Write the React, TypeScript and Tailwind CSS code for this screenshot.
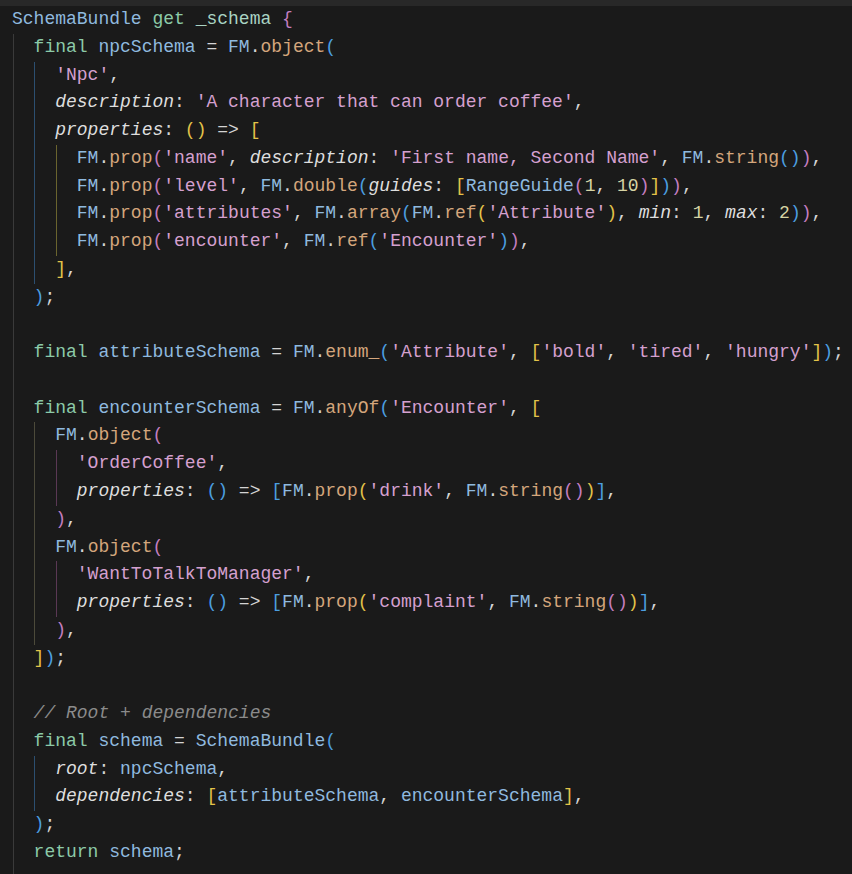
import React from "react";

type Tok = [string, string?];
type Guide = "g0" | "b1" | "y2" | "d1" | "p2" | "b1s";

const K = "text-[#8ccaa8]";
const V = "text-[#8fb9df]";
const F = "text-[#d4a67c]";
const S = "text-[#d5a0cf]";
const P = "italic text-[#dedede]";
const N = "text-[#d6d4a4]";
const Y = "text-[#e3c349]";
const Pk = "text-[#c47ec0]";
const B = "text-[#4c9fe0]";
const C = "italic text-[#8b8b8b]";

const fm = (m: string): Tok[] => [["FM", V], ["."], [m, F]];

const lines: { t: Tok[]; g: Guide[] }[] = [
  { t: [["SchemaBundle", V], [" "], ["get", K], [" "], ["_schema", "text-[#a9d3c3]"], [" "], ["{", Pk]], g: [] },
  { t: [["  "], ["final", K], [" "], ["npcSchema", V], [" = "], ...fm("object"), ["(", B]], g: ["g0"] },
  { t: [["    "], ["'Npc'", S], [","]], g: ["g0", "b1"] },
  { t: [["    "], ["description", P], [": "], ["'A character that can order coffee'", S], [","]], g: ["g0", "b1"] },
  { t: [["    "], ["properties", P], [": "], ["()", Y], [" => "], ["[", Y]], g: ["g0", "b1"] },
  {
    t: [["      "], ...fm("prop"), ["(", Pk], ["'name'", S], [", "], ["description", P], [": "], ["'First name, Second Name'", S], [", "], ...fm("string"), ["()", B], [")", Pk], [","]],
    g: ["g0", "b1", "y2"],
  },
  {
    t: [["      "], ...fm("prop"), ["(", Pk], ["'level'", S], [", "], ...fm("double"), ["(", B], ["guides", P], [": "], ["[", Y], ["RangeGuide", V], ["(", Pk], ["1", N], [", "], ["10", N], [")", Pk], ["]", Y], [")", B], [")", Pk], [","]],
    g: ["g0", "b1", "y2"],
  },
  {
    t: [["      "], ...fm("prop"), ["(", Pk], ["'attributes'", S], [", "], ...fm("array"), ["(", B], ...fm("ref"), ["(", Y], ["'Attribute'", S], [")", Y], [", "], ["min", P], [": "], ["1", N], [", "], ["max", P], [": "], ["2", N], [")", B], [")", Pk], [","]],
    g: ["g0", "b1", "y2"],
  },
  {
    t: [["      "], ...fm("prop"), ["(", Pk], ["'encounter'", S], [", "], ...fm("ref"), ["(", B], ["'Encounter'", S], [")", B], [")", Pk], [","]],
    g: ["g0", "b1", "y2"],
  },
  { t: [["    "], ["]", Y], [","]], g: ["g0", "b1"] },
  { t: [["  "], [")", B], [";"]], g: ["g0"] },
  { t: [[""]], g: ["g0"] },
  {
    t: [["  "], ["final", K], [" "], ["attributeSchema", V], [" = "], ...fm("enum_"), ["(", B], ["'Attribute'", S], [", "], ["[", Y], ["'bold'", S], [", "], ["'tired'", S], [", "], ["'hungry'", S], ["]", Y], [")", B], [";"]],
    g: ["g0"],
  },
  { t: [[""]], g: ["g0"] },
  { t: [["  "], ["final", K], [" "], ["encounterSchema", V], [" = "], ...fm("anyOf"), ["(", B], ["'Encounter'", S], [", "], ["[", Y]], g: ["g0"] },
  { t: [["    "], ...fm("object"), ["(", Pk]], g: ["g0", "d1"] },
  { t: [["      "], ["'OrderCoffee'", S], [","]], g: ["g0", "d1", "p2"] },
  {
    t: [["      "], ["properties", P], [": "], ["()", B], [" => "], ["[", B], ...fm("prop"), ["(", Y], ["'drink'", S], [", "], ...fm("string"), ["()", Pk], [")", Y], ["]", B], [","]],
    g: ["g0", "d1", "p2"],
  },
  { t: [["    "], [")", Pk], [","]], g: ["g0", "d1"] },
  { t: [["    "], ...fm("object"), ["(", Pk]], g: ["g0", "d1"] },
  { t: [["      "], ["'WantToTalkToManager'", S], [","]], g: ["g0", "d1", "p2"] },
  {
    t: [["      "], ["properties", P], [": "], ["()", B], [" => "], ["[", B], ...fm("prop"), ["(", Y], ["'complaint'", S], [", "], ...fm("string"), ["()", Pk], [")", Y], ["]", B], [","]],
    g: ["g0", "d1", "p2"],
  },
  { t: [["    "], [")", Pk], [","]], g: ["g0", "d1"] },
  { t: [["  "], ["]", Y], [")", B], [";"]], g: ["g0"] },
  { t: [[""]], g: ["g0"] },
  { t: [["  "], ["// Root + dependencies", C]], g: ["g0"] },
  { t: [["  "], ["final", K], [" "], ["schema", V], [" = "], ["SchemaBundle", V], ["(", B]], g: ["g0"] },
  { t: [["    "], ["root", P], [": "], ["npcSchema", V], [","]], g: ["g0", "b1s"] },
  {
    t: [["    "], ["dependencies", P], [": "], ["[", Y], ["attributeSchema", V], [", "], ["encounterSchema", V], ["]", Y], [","]],
    g: ["g0", "b1s"],
  },
  { t: [["  "], [")", B], [";"]], g: ["g0"] },
  { t: [["  "], ["return", K], [" "], ["schema", V], [";"]], g: ["g0"] },
  { t: [[""]], g: ["g0"] },
];

const guideCls: Record<Guide, string> = {
  g0: "left-[13px] bg-[#3a3a3a]",
  b1: "left-[34px] bg-[#2c4f70]",
  b1s: "left-[34px] bg-[#2c4f70]",
  y2: "left-[56px] bg-[#6a642e]",
  d1: "left-[34px] bg-[#4c4a3a]",
  p2: "left-[56px] bg-[#5a3854]",
};

export default function App() {
  return (
    <div className="w-[852px] h-[874px] overflow-hidden bg-[#1a1a1a] flex flex-col">
      <div className="h-[6px] shrink-0 bg-[#282828]" />
      <div
        className="flex flex-col pl-[12px] text-[18px] leading-[27.77px] text-[#d4d4d4] whitespace-pre"
        style={{ fontFamily: '"Liberation Mono", monospace' }}
      >
        {lines.map((ln, i) => (
          <div key={i} className="relative h-[27.77px]">
            {ln.g.map((g, j) => (
              <span key={j} className={`absolute top-0 bottom-0 w-px -ml-[12px] ${guideCls[g]}`} />
            ))}
            {ln.t.map(([txt, cls], j) => (
              <span key={j} className={cls}>
                {txt}
              </span>
            ))}
          </div>
        ))}
      </div>
    </div>
  );
}
